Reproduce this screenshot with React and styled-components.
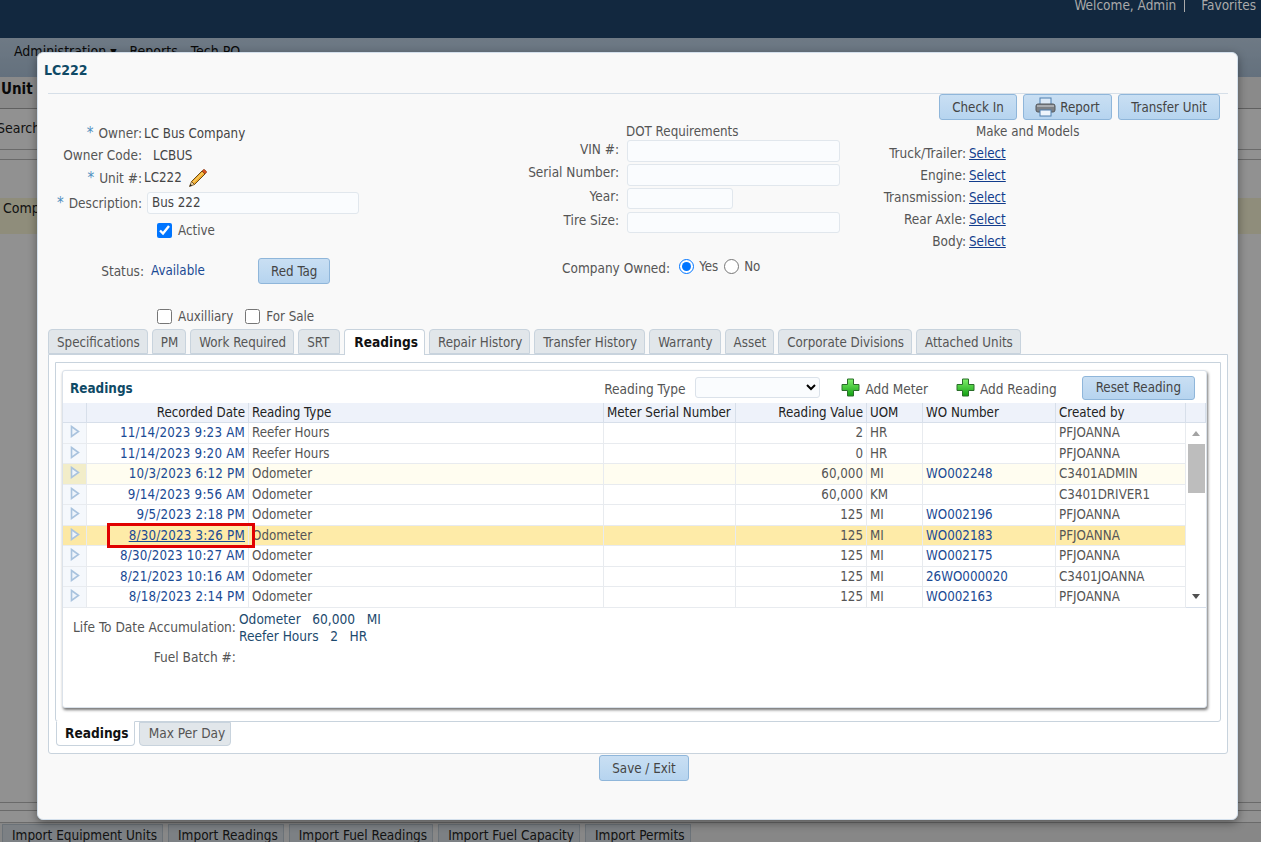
import React from 'react';
import styled, { createGlobalStyle } from 'styled-components';

const GlobalStyle = createGlobalStyle`
  html, body { margin: 0; padding: 0; background: #fff; }
  body { font-family: "DejaVu Sans Condensed", "Noto Sans", "Liberation Sans", sans-serif; font-size: 13.25px; color: #555; }
  * { box-sizing: border-box; }
`;

const Page = styled.div`
  position: relative;
  height: 842px;
  overflow: hidden;
  display: flex;
  flex-direction: column;
  background: #fff;
`;
const TopBar = styled.div`
  position: relative;
  z-index: 3;
  flex: 0 0 38px;
  background: #12283f;
  color: #aaa;
  font-size: 13.5px;
  display: flex;
  justify-content: flex-end;
  line-height: 11px;
  padding-right: 5px;
`;
const TopDivider = styled.span`
  margin: 0 16px 0 8px;
  height: 12px;
  border-left: 1px solid #aaa;
`;
const NavBar = styled.div`
  flex: 0 0 39px;
  background: linear-gradient(#c2d6ea, #b0c6dc);
  color: #111;
  font-size: 14px;
  display: flex;
  gap: 13px;
  padding: 5px 0 0 14px;
`;
const PageTitle = styled.div`
  flex: 0 0 32px;
  font-weight: bold;
  color: #111;
  padding: 1px 0 0 1px;
  line-height: 22px;
  font-size: 15px;
  background: #f3f3f3;
  border-bottom: 1px solid #aaa;
`;
const SearchRow = styled.div`
  flex: 0 0 41px;
  text-indent: -3px;
  font-size: 14px;
  line-height: 38px;
  color: #222;
  border-bottom: 1px solid #bbb;
`;
const Spacer = styled.div`
  flex: 0 0 ${(p) => p.$h}px;
  border-bottom: ${(p) => (p.$line ? '1px solid #bbb' : 'none')};
`;
const YellowRow = styled.div`
  flex: 0 0 36px;
  background: #fbf8d8;
  color: #222;
  font-size: 14px;
  line-height: 20px;
  padding-left: 3px;
`;
const BottomTabs = styled.div`
  display: flex;
  gap: 5px;
  padding: 1px 0 0 2px;
  height: 20px;
  background: #eee;
`;
const BottomTab = styled.div`
  padding: 2px 5px 0 9px;
  font-size: 13.5px;
  background: #dbe2e8;
  border: 1px solid #bcc8d3;
  color: #222;
  white-space: nowrap;
`;
const Overlay = styled.div`
  position: absolute;
  z-index: 1;
  top: 38px;
  left: 0;
  right: 0;
  bottom: 0;
  background: rgba(0, 0, 0, 0.43);
`;

const Modal = styled.div`
  position: absolute;
  z-index: 2;
  left: 37px;
  top: 52px;
  width: 1201px;
  height: 768px;
  background: #f9f9f9;
  border-radius: 6px;
  border: 1px solid #d4e0ec;
  box-shadow: 0 3px 10px rgba(0, 0, 0, 0.4);
  display: flex;
  flex-direction: column;
`;
const ModalTitle = styled.div`
  flex: 0 0 40px;
  margin-left: 6px;
  font-weight: bold;
  font-size: 14px;
  color: #0f4a66;
  line-height: 35px;
`;
const Rule = styled.div`
  margin: 0 9px 0 10px;
  border-top: 1px solid #d6dfe8;
`;
const ActionRow = styled.div`
  display: flex;
  justify-content: flex-end;
  gap: 6px;
  padding-right: 17px;
  height: 26px;
`;
const Button = styled.button`
  font: inherit;
  color: #444;
  height: ${(p) => p.$h || 26}px;
  padding: 0 ${(p) => p.$px || 12}px;
  display: inline-flex;
  align-items: center;
  gap: 4px;
  border: 1px solid #8fb6da;
  border-radius: 3px;
  background: linear-gradient(#c9dff3, #b6d4ef);
  white-space: nowrap;
`;
const FormGrid = styled.div`
  display: grid;
  grid-template-columns: 452px 360px 1fr;
  margin-left: 10px;
  height: 209px;
`;
const Col = styled.div`
  padding-top: ${(p) => p.$pt || 2}px;
`;
const Row = styled.div`
  display: flex;
  align-items: ${(p) => p.$align || 'center'};
  height: ${(p) => p.$h || 22}px;
  margin-top: ${(p) => p.$mt || 0}px;
  margin-left: ${(p) => p.$ml || 0}px;
`;
const Label = styled.div`
  flex: 0 0 ${(p) => p.$w || 94}px;
  text-align: right;
  font-size: 13.5px;
  color: #555;
  margin-right: ${(p) => p.$gap ?? 2}px;
  padding-top: ${(p) => p.$pt || 0}px;
  white-space: nowrap;
`;
const Req = styled.span`
  color: #4f8fc0;
  font-size: 15px;
  margin-right: 5px;
`;
const Value = styled.span`
  color: #444;
  margin-left: ${(p) => p.$ml || 0}px;
  white-space: nowrap;
`;
const TextInput = styled.input`
  font: inherit;
  color: #444;
  width: ${(p) => p.$w || 213}px;
  height: ${(p) => p.$h || 22}px;
  margin-left: ${(p) => p.$ml || 0}px;
  padding: 0 4px;
  background: #fafcfe;
  border: 1px solid #e1e7ed;
  border-radius: 3px;
  outline: none;
`;
const Check = styled.label`
  display: inline-flex;
  align-items: center;
  gap: 6px;
  color: #555;
  margin-left: ${(p) => p.$ml || 0}px;
  input { width: 15px; height: 15px; margin: 0; accent-color: #0075ff; }
`;
const Available = styled.span`
  color: #1a4a94;
  margin-left: 7px;
  padding-top: 5px;
  flex: 0 0 107px;
`;
const Heading = styled.div`
  height: ${(p) => p.$h}px;
  margin-left: ${(p) => p.$ml}px;
  color: #555;
  line-height: 17px;
  white-space: nowrap;
`;
const Radio = styled.label`
  display: inline-flex;
  align-items: center;
  gap: 5px;
  margin-right: 6px;
  color: #555;
  input { width: 15px; height: 15px; margin: 0; accent-color: #0075ff; }
`;
const SelectLink = styled.a`
  color: #123c8c;
  text-decoration: underline;
`;

const TabStrip = styled.div`
  display: flex;
  gap: 4px;
  margin-left: 10px;
  height: 25px;
  position: relative;
  z-index: 1;
`;
const Tab = styled.div`
  padding: ${(p) => (p.$active ? '0 6px 0 9px' : `0 ${7 + (p.$extra || 0)}px 0 8px`)};
  height: ${(p) => (p.$active ? 26 : 25)}px;
  line-height: 25px;
  background: ${(p) => (p.$active ? '#fff' : '#e1e6ea')};
  border: 1px solid #c8d3dd;
  border-bottom: ${(p) => (p.$active ? 'none' : '1px solid #c8d3dd')};
  border-radius: 4px 4px 0 0;
  color: ${(p) => (p.$active ? '#111' : '#555')};
  font-weight: ${(p) => (p.$active ? 'bold' : 'normal')};
  font-size: ${(p) => (p.$active ? '13.6px' : 'inherit')};
  white-space: nowrap;
`;
const OuterPanel = styled.div`
  margin-left: 10px;
  width: 1180px;
  height: 400px;
  background: #fff;
  border: 1px solid #c8d3dd;
  border-radius: 0 0 3px 3px;
  padding: 7px 6px 0;
`;
const InnerPanel = styled.div`
  height: 360px;
  border: 1px solid #c8d3dd;
  border-radius: 0 0 3px 3px;
  padding: 7px 6px;
`;
const Card = styled.div`
  height: 338px;
  width: 1145px;
  background: #fff;
  border: 1px solid #dbe2ea;
  border-radius: 3px;
  box-shadow: 1px 2px 3px rgba(0, 0, 0, 0.55);
  display: flex;
  flex-direction: column;
`;
const CardHead = styled.div`
  flex: 0 0 32px;
  display: flex;
  align-items: center;
  padding: 1px 11px 0 7px;
`;
const CardTitle = styled.div`
  font-weight: bold;
  font-size: 13.4px;
  color: #0f4a66;
  flex: 1;
  padding-top: 1px;
`;
const ToolbarLabel = styled.span`
  font-size: 13.6px;
  padding-top: 2px;
`;
const TypeSelect = styled.select`
  font: inherit;
  width: 125px;
  height: 21px;
  margin: 0 21px 0 10px;
  background: #fafcfe;
  border: 1px solid #dbe2ea;
  border-radius: 3px;
`;
const AddAction = styled.div`
  display: flex;
  align-items: center;
  gap: 5px;
  color: #555;
  font-size: 13.5px;
  margin-right: ${(p) => p.$mr}px;
  white-space: nowrap;
  span { padding-top: 2px; }
`;
const GridRow = styled.div`
  display: grid;
  grid-template-columns: 24px 162px 355px 132px 131px 56px 133px 130px ${(p) => (p.$head ? '20px' : '')};
  height: ${(p) => (p.$head ? 20 : 20.5)}px;
  background: ${(p) => (p.$head ? '#eef2fa' : p.$tone === 'sel' ? '#feeba8' : p.$tone === 'alt' ? '#fffdf0' : '#fff')};
  border-bottom: 1px solid ${(p) => (p.$head ? '#d7dfea' : '#e8ebef')};
  color: ${(p) => (p.$head ? '#222' : '#555')};
`;
const Cell = styled.div`
  padding: 0 3px;
  line-height: 20px;
  text-align: ${(p) => (p.$right ? 'right' : 'left')};
  border-right: 1px solid ${(p) => (p.$head ? '#d7dfea' : '#e8ebef')};
  white-space: nowrap;
  overflow: hidden;
`;
const Expander = styled.div`
  display: flex;
  align-items: center;
  padding: 0 0 2px 7px;
  background: ${(p) => (p.$tone === 'sel' ? '#fce8a4' : p.$tone === 'alt' ? '#f2edc9' : '#f5f8fc')};
  border-right: 1px solid #e8ebef;
`;
const DateLink = styled.a`
  color: #1a4a94;
  letter-spacing: 0.2px;
  text-decoration: ${(p) => (p.$under ? 'underline' : 'none')};
`;
const WoLink = styled.a`
  color: #1a4a94;
  text-decoration: none;
`;
const GridBody = styled.div`
  display: flex;
  height: 185px;
  border-bottom: 1px solid #d7dfea;
`;
const Rows = styled.div`
  position: relative;
  flex: 0 0 1123px;
`;
const RedBox = styled.div`
  position: absolute;
  left: 44px;
  top: 100px;
  width: 148px;
  height: 25px;
  border: 3px solid #e00000;
`;
const Scrollbar = styled.div`
  flex: 1;
  display: flex;
  flex-direction: column;
  align-items: center;
  padding: 8px 0 8px;
`;
const ScrollThumb = styled.div`
  width: 17px;
  height: 49px;
  margin-top: 8px;
  background: #bdbdbd;
`;
const ScrollArrow = styled.div`
  width: 0;
  height: 0;
  border-left: 4px solid transparent;
  border-right: 4px solid transparent;
  ${(p) => (p.$down ? 'border-top: 5px solid #505050; margin-top: auto;' : 'border-bottom: 5px solid #a3a3a3;')}
`;
const Summary = styled.div`
  padding-top: 3px;
  display: grid;
  grid-template-columns: 173px 1fr;
  column-gap: 3px;
  font-size: 13.6px;
`;
const SummaryLabel = styled.div`
  text-align: right;
  height: ${(p) => p.$h}px;
  line-height: ${(p) => p.$h}px;
  white-space: nowrap;
`;
const SummaryValues = styled.div`
  color: #1d4a6e;
  line-height: 17px;
  white-space: pre;
`;
const SubTabs = styled.div`
  display: flex;
  gap: 4px;
  margin: -1px 0 0 1px;
  position: relative;
`;
const SubTab = styled(Tab)`
  height: ${(p) => (p.$active ? 25 : 24)}px;
  margin-top: ${(p) => (p.$active ? 0 : 1)}px;
  padding: ${(p) => (p.$active ? '0 5px 0 8px' : '0 5px 0 9px')};
  line-height: ${(p) => (p.$active ? 22 : 20)}px;
  font-size: 13.6px;
  border-radius: 0 0 4px 4px;
  border-top: ${(p) => (p.$active ? '1px solid #fff' : '1px solid #c8d3dd')};
  border-bottom: 1px solid #c8d3dd;
`;
const SaveRow = styled.div`
  display: flex;
  justify-content: center;
  padding: 1px 0 0 13px;
`;
const PencilWrap = styled.svg`
  margin-left: 6px;
`;

const Pencil = () => (
  <PencilWrap width="20" height="20" viewBox="0 0 20 20">
    <path d="M3.5 13.5L14 3l3 3L6.5 16.5z" fill="#f2ad2e" stroke="#6b4a16" strokeWidth="1" />
    <path d="M5 14.5L15 4.5" stroke="#fbe08c" strokeWidth="1" />
    <path d="M3.5 13.5l3 3-5 2z" fill="#efd3a2" stroke="#6b4a16" strokeWidth="0.8" />
    <path d="M1.5 18.5l.8-2.6 1.8 1.6z" fill="#222" />
    <path d="M14 3l1.3-1.3a1 1 0 0 1 1.4 0l1.6 1.6a1 1 0 0 1 0 1.4L17 6z" fill="#d9531e" stroke="#7a3410" strokeWidth="0.6" />
  </PencilWrap>
);

const Printer = () => (
  <svg width="21" height="20" viewBox="0 0 21 20">
    <rect x="5" y="1" width="11" height="7" fill="#dbe9f7" stroke="#4f7fae" />
    <rect x="1" y="7" width="19" height="8" rx="2" fill="#7d8186" stroke="#55585c" />
    <rect x="2" y="8" width="17" height="2" fill="#a9adb2" />
    <rect x="5" y="13" width="11" height="6" fill="#eef5fc" stroke="#4f7fae" />
  </svg>
);

const Plus = () => (
  <svg width="19" height="19" viewBox="0 0 19 19">
    <defs>
      <linearGradient id="plusGreen" x1="0" y1="0" x2="0" y2="1">
        <stop offset="0" stopColor="#7ff06a" />
        <stop offset="1" stopColor="#12a012" />
      </linearGradient>
    </defs>
    <path d="M6.5 1h6v5.5H18v6h-5.5V18h-6v-5.5H1v-6h5.5z" fill="url(#plusGreen)" stroke="#2a6e2a" strokeWidth="1" />
  </svg>
);

const Arrow = () => (
  <svg width="10" height="13" viewBox="0 0 10 13">
    <path d="M1.5 1.5L8.5 6.5L1.5 11.5Z" fill="#eef4fb" stroke="#a9c3de" strokeWidth="1.6" />
  </svg>
);

const readings = [
  { date: '11/14/2023 9:23 AM', type: 'Reefer Hours', value: '2', uom: 'HR', wo: '', by: 'PFJOANNA' },
  { date: '11/14/2023 9:20 AM', type: 'Reefer Hours', value: '0', uom: 'HR', wo: '', by: 'PFJOANNA' },
  { date: '10/3/2023 6:12 PM', type: 'Odometer', value: '60,000', uom: 'MI', wo: 'WO002248', by: 'C3401ADMIN', tone: 'alt' },
  { date: '9/14/2023 9:56 AM', type: 'Odometer', value: '60,000', uom: 'KM', wo: '', by: 'C3401DRIVER1' },
  { date: '9/5/2023 2:18 PM', type: 'Odometer', value: '125', uom: 'MI', wo: 'WO002196', by: 'PFJOANNA' },
  { date: '8/30/2023 3:26 PM', type: 'Odometer', value: '125', uom: 'MI', wo: 'WO002183', by: 'PFJOANNA', tone: 'sel' },
  { date: '8/30/2023 10:27 AM', type: 'Odometer', value: '125', uom: 'MI', wo: 'WO002175', by: 'PFJOANNA' },
  { date: '8/21/2023 10:16 AM', type: 'Odometer', value: '125', uom: 'MI', wo: '26WO000020', by: 'C3401JOANNA' },
  { date: '8/18/2023 2:14 PM', type: 'Odometer', value: '125', uom: 'MI', wo: 'WO002163', by: 'PFJOANNA' },
];

const mainTabs = ['Specifications', 'PM', 'Work Required', 'SRT', 'Readings', 'Repair History', 'Transfer History', 'Warranty', 'Asset', 'Corporate Divisions', 'Attached Units'];
const makes = ['Truck/Trailer', 'Engine', 'Transmission', 'Rear Axle', 'Body'];
const imports = ['Import Equipment Units', 'Import Readings', 'Import Fuel Readings', 'Import Fuel Capacity', 'Import Permits'];

export default function App() {
  return (
    <Page>
      <GlobalStyle />
      <TopBar>
        Welcome, Admin<TopDivider />Favorites
      </TopBar>
      <NavBar>
        <span>Administration ▾</span>
        <span>Reports</span>
        <span>Tech PO</span>
      </NavBar>
      <PageTitle>Unit Info</PageTitle>
      <SearchRow>Search</SearchRow>
      <Spacer $h={10} $line />
      <Spacer $h={38} />
      <YellowRow>Company</YellowRow>
      <Spacer $h={569} $line />
      <Spacer $h={8} $line />
      <Spacer $h={12} $line />
      <BottomTabs>
        {imports.map((t) => (
          <BottomTab key={t}>{t}</BottomTab>
        ))}
      </BottomTabs>
      <Overlay />

      <Modal>
        <ModalTitle>LC222</ModalTitle>
        <Rule />
        <ActionRow>
          <Button>Check In</Button>
          <Button $px={11.5}>
            <Printer />
            Report
          </Button>
          <Button>Transfer Unit</Button>
        </ActionRow>

        <FormGrid>
          <Col>
            <Row>
              <Label><Req>*</Req>Owner:</Label>
              <Value>LC Bus Company</Value>
            </Row>
            <Row>
              <Label>Owner Code:</Label>
              <Value $ml={9}>LCBUS</Value>
            </Row>
            <Row $h={23}>
              <Label><Req>*</Req>Unit #:</Label>
              <Value>LC222</Value>
              <Pencil />
            </Row>
            <Row $mt={2} $h={23}>
              <Label><Req>*</Req>Description:</Label>
              <TextInput $w={212} $ml={3} defaultValue="Bus 222" />
            </Row>
            <Row $mt={5}>
              <Check $ml={109}>
                <input type="checkbox" defaultChecked readOnly />
                Active
              </Check>
            </Row>
            <Row $mt={17} $h={30} $align="flex-start">
              <Label $w={96} $gap={0} $pt={5}>Status:</Label>
              <Available>Available</Available>
              <Button $px={12}>Red Tag</Button>
            </Row>
            <Row $mt={17}>
              <Check $ml={109}>
                <input type="checkbox" />
                Auxilliary
              </Check>
              <Check $ml={12}>
                <input type="checkbox" />
                For Sale
              </Check>
            </Row>
          </Col>

          <Col $pt={3}>
            <Heading $h={17} $ml={126}>DOT Requirements</Heading>
            <Row $align="flex-start" $h={24}>
              <Label $w={119} $gap={8} $pt={1}>VIN #:</Label>
              <TextInput />
            </Row>
            <Row $align="flex-start" $h={24}>
              <Label $w={119} $gap={8}>Serial Number:</Label>
              <TextInput />
            </Row>
            <Row $align="flex-start" $h={24}>
              <Label $w={119} $gap={8}>Year:</Label>
              <TextInput $w={106} $h={21} />
            </Row>
            <Row $align="flex-start" $h={22}>
              <Label $w={119} $gap={8}>Tire Size:</Label>
              <TextInput $h={21} />
            </Row>
            <Row $mt={21} $h={22} $ml={62}>
              <Label $w={107} $gap={9} $pt={4}>Company Owned:</Label>
              <Radio>
                <input type="radio" name="owned" defaultChecked />
                Yes
              </Radio>
              <Radio>
                <input type="radio" name="owned" />
                No
              </Radio>
            </Row>
          </Col>

          <Col $pt={3}>
            <Heading $h={19} $ml={116}>Make and Models</Heading>
            {makes.map((m) => (
              <Row key={m}>
                <Label $w={106} $gap={3}>{m}:</Label>
                <SelectLink href="#">Select</SelectLink>
              </Row>
            ))}
          </Col>
        </FormGrid>

        <TabStrip>
          {mainTabs.map((t) => (
            <Tab key={t} $active={t === 'Readings'} $extra={t === 'SRT' ? 3 : 0}>{t}</Tab>
          ))}
        </TabStrip>
        <OuterPanel>
          <InnerPanel>
            <Card>
              <CardHead>
                <CardTitle>Readings</CardTitle>
                <ToolbarLabel>Reading Type</ToolbarLabel>
                <TypeSelect defaultValue="">
                  <option value="" />
                </TypeSelect>
                <AddAction $mr={28}><Plus /><span>Add Meter</span></AddAction>
                <AddAction $mr={25}><Plus /><span>Add Reading</span></AddAction>
                <Button $h={24} $px={13}>Reset Reading</Button>
              </CardHead>
              <GridRow $head>
                <Cell $head />
                <Cell $head $right>Recorded Date</Cell>
                <Cell $head>Reading Type</Cell>
                <Cell $head>Meter Serial Number</Cell>
                <Cell $head $right>Reading Value</Cell>
                <Cell $head>UOM</Cell>
                <Cell $head>WO Number</Cell>
                <Cell $head>Created by</Cell>
                <Cell $head />
              </GridRow>
              <GridBody>
                <Rows>
                  {readings.map((r) => (
                    <GridRow key={r.date} $tone={r.tone}>
                      <Expander $tone={r.tone}><Arrow /></Expander>
                      <Cell $right><DateLink href="#" $under={r.tone === 'sel'}>{r.date}</DateLink></Cell>
                      <Cell>{r.type}</Cell>
                      <Cell />
                      <Cell $right>{r.value}</Cell>
                      <Cell>{r.uom}</Cell>
                      <Cell><WoLink href="#">{r.wo}</WoLink></Cell>
                      <Cell>{r.by}</Cell>
                    </GridRow>
                  ))}
                  <RedBox />
                </Rows>
                <Scrollbar>
                  <ScrollArrow />
                  <ScrollThumb />
                  <ScrollArrow $down />
                </Scrollbar>
              </GridBody>
              <Summary>
                <SummaryLabel $h={33}>Life To Date Accumulation:</SummaryLabel>
                <SummaryValues>{'Odometer   60,000   MI\nReefer Hours   2   HR'}</SummaryValues>
                <SummaryLabel $h={25}>Fuel Batch #:</SummaryLabel>
              </Summary>
            </Card>
          </InnerPanel>
          <SubTabs>
            <SubTab $active>Readings</SubTab>
            <SubTab>Max Per Day</SubTab>
          </SubTabs>
        </OuterPanel>
        <SaveRow>
          <Button $px={12}>Save / Exit</Button>
        </SaveRow>
      </Modal>
    </Page>
  );
}
